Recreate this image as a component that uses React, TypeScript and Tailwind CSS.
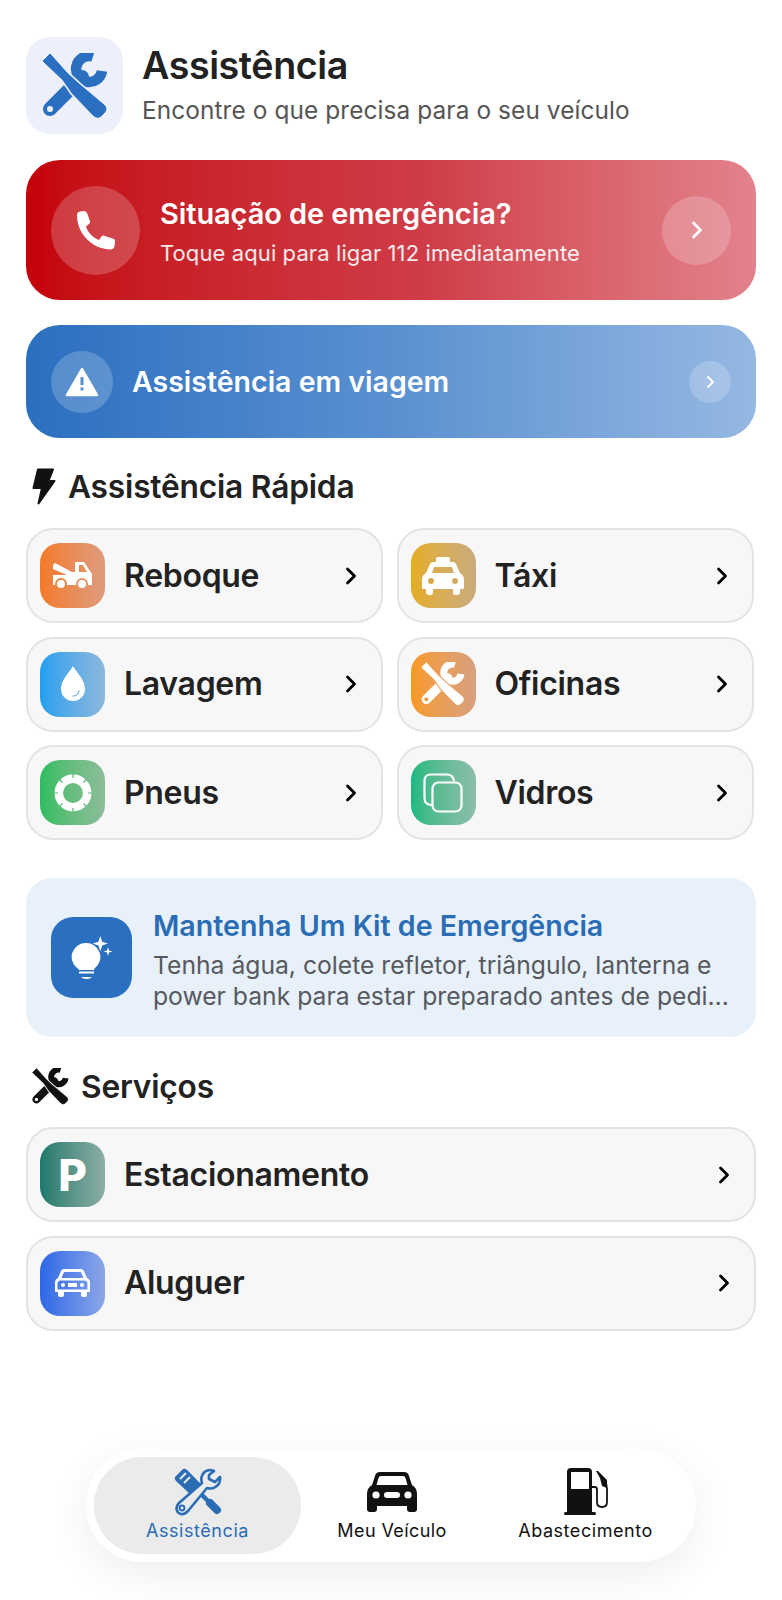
import type { ReactNode } from "react";

const font = { fontFamily: "Inter, 'Noto Sans', sans-serif" };

function Chevron({ className = "text-black" }: { className?: string }) {
  return (
    <svg width="12" height="18" viewBox="0 0 12 18" fill="none" className={className}>
      <path d="M2.5 2 L9.5 9 L2.5 16" stroke="currentColor" strokeWidth="2.8" strokeLinecap="round" strokeLinejoin="round" />
    </svg>
  );
}

const driverPath = "M1 8 L8 1 L25 20 L37 31 L62 52 Q66 56 62 60 L59 63 Q55 66 51 62 L30 40 L21 27 Z";

// filled crossed wrench + screwdriver, used in header, Oficinas and Serviços
function ToolsIcon({ size, id, className }: { size: number; id: string; className?: string }) {
  return (
    <svg width={size} height={size} viewBox="0 0 66 66" fill="none" className={className}>
      <mask id={id} maskUnits="userSpaceOnUse" x="0" y="0" width="66" height="66">
        <rect width="66" height="66" fill="white" />
        <path d={driverPath} fill="black" stroke="black" strokeWidth="4" />
        <circle cx="8" cy="56" r="3" fill="black" />
      </mask>
      <g mask={`url(#${id})`} stroke="currentColor">
        <path d="M8 56 L40 24" strokeWidth="14" strokeLinecap="round" />
        <path d="M51 3.6 A 13 13 0 1 0 60 18" strokeWidth="10.5" />
      </g>
      <path d={driverPath} fill="currentColor" stroke="currentColor" strokeWidth="1" strokeLinejoin="round" />
    </svg>
  );
}

function ToolsOutline() {
  return (
    <svg width="48" height="48" viewBox="0 0 48 48" fill="none" className="text-[#2a6db5]">
      <path d="M1 9 L9 1 Q11 0 13 2 L27 16 L17 27 L2 13 Q0 11 1 9Z" fill="currentColor" />
      <path d="M21 20 L42 41" stroke="currentColor" strokeWidth="4.5" />
      <path d="M36 35 L43 42" stroke="currentColor" strokeWidth="8" strokeLinecap="round" />
      <path d="M6 11 L12 5 M10 15 L16 9" stroke="#ebebeb" strokeWidth="2" />
      <path
        d="M35 2 C29 3 26 9 28 15 L5 35 C1 39 2 45 7 46 C10 47 12 45 14 43 L33 20 C40 22 47 17 46 9 L41 14 L35 11 L35 7 L40 3 Q38 2 35 2Z"
        fill="#ebebeb"
        stroke="currentColor"
        strokeWidth="2.6"
        strokeLinejoin="round"
      />
      <circle cx="8" cy="40" r="2.4" stroke="currentColor" strokeWidth="2" />
    </svg>
  );
}

function PhoneIcon() {
  return (
    <svg width="40" height="40" viewBox="0 0 40 40" fill="white">
      <path d="M1 5 Q1 2 4 1.5 L8 1 Q10 1 11 3 L14 11 Q14.5 13 13 14 L10 16.5 C11.5 22 17 28 23 30 L25.5 26.5 Q27 25 29 26 L38 29 Q39.5 30 39 32 L38.5 36 Q38 39 35 39.5 C15 39 1 23 1 5Z" />
    </svg>
  );
}

function Tile({ gradient, children }: { gradient: string; children: ReactNode }) {
  return (
    <div className={`flex h-[65px] w-[65px] shrink-0 items-center justify-center rounded-[20px] bg-gradient-to-r ${gradient}`}>
      {children}
    </div>
  );
}

function Row({ label, gradient, icon }: { label: string; gradient: string; icon: ReactNode }) {
  return (
    <div className="flex h-[95px] items-center rounded-[27px] border-2 border-[#e3e3e3] bg-[#f7f7f7] pl-[12px] pr-[24px]">
      <Tile gradient={gradient}>{icon}</Tile>
      <span className="ml-[19px] flex-1 text-[32px] font-semibold tracking-[-0.3px] text-[#222]">{label}</span>
      <Chevron />
    </div>
  );
}

function SectionTitle({ icon, children }: { icon: ReactNode; children: ReactNode }) {
  return (
    <div className="flex h-[40px] items-center pl-[6px]">
      {icon}
      <h2 className="mt-[2px] text-[31.7px] font-semibold tracking-[-0.2px] text-[#222]">{children}</h2>
    </div>
  );
}

export default function App() {
  return (
    <div style={font} className="flex min-h-[1600px] w-[782px] flex-col bg-white px-[26px] pt-[37px]">
      <header className="flex items-center">
        <div className="flex h-[97px] w-[97px] items-center justify-center rounded-[24px] bg-[#edf0fb]">
          <ToolsIcon size={66} id="h" className="text-[#2a6fc0]" />
        </div>
        <div className="ml-[19px]">
          <h1 className="text-[37.6px] font-semibold leading-[44px] tracking-[-0.4px] text-[#222]">Assistência</h1>
          <p className="mt-[5px] text-[24.4px] leading-[34px] tracking-[0.1px] text-[#555]">Encontre o que precisa para o seu veículo</p>
        </div>
      </header>

      <div className="mt-[26px] flex h-[140px] items-center rounded-[34px] bg-gradient-to-r from-[#c40008] via-[#cf3c48] via-55% to-[#e2828d] pl-[25px] pr-[25px]">
        <div className="flex h-[89px] w-[89px] items-center justify-center rounded-full bg-white/20">
          <PhoneIcon />
        </div>
        <div className="ml-[20px] flex-1 pt-[4px] text-white">
          <div className="text-[29px] font-semibold leading-[36px] tracking-[-0.1px]">Situação de emergência?</div>
          <div className="mt-[6px] text-[22px] leading-[30px] tracking-[0.1px] text-white/90">Toque aqui para ligar 112 imediatamente</div>
        </div>
        <div className="flex h-[69px] w-[69px] items-center justify-center rounded-full bg-white/20">
          <Chevron className="text-white" />
        </div>
      </div>

      <div className="mt-[25px] flex h-[113px] items-center rounded-[34px] bg-gradient-to-r from-[#2a6fc0] via-[#5a90d0] via-50% to-[#95b8e2] pl-[25px] pr-[25px]">
        <div className="flex h-[62px] w-[62px] items-center justify-center rounded-full bg-white/20">
          <svg width="34" height="30" viewBox="0 0 34 30">
            <path d="M17 2 L32 28 H2 Z" fill="white" stroke="white" strokeWidth="2.5" strokeLinejoin="round" />
            <rect x="15.5" y="10" width="3" height="8" fill="#5a8fcf" />
            <rect x="15.5" y="20.5" width="3" height="3" fill="#5a8fcf" />
          </svg>
        </div>
        <div className="ml-[19px] flex-1 pt-[2px] text-[28.5px] font-semibold text-white">Assistência em viagem</div>
        <div className="flex h-[42px] w-[42px] items-center justify-center rounded-full bg-white/20">
          <svg width="9" height="14" viewBox="0 0 9 14" fill="none">
            <path d="M2 2 L7 7 L2 12" stroke="white" strokeWidth="2" strokeLinecap="round" strokeLinejoin="round" />
          </svg>
        </div>
      </div>

      <div className="mt-[28px]">
        <SectionTitle
          icon={
            <svg width="24" height="37" viewBox="0 0 24 37" className="mr-[12px]">
              <path d="M6 1.5 H21 L16.5 13 H22.5 L6.5 35.5 L10 20 H1.5 Z" fill="#111" stroke="#111" strokeWidth="2" strokeLinejoin="round" />
            </svg>
          }
        >
          Assistência Rápida
        </SectionTitle>
      </div>

      <div className="mt-[22px] grid grid-cols-[357px_357px] gap-[13.5px]">
        <Row
          label="Reboque"
          gradient="from-[#f47a25] to-[#dd9b7b]"
          icon={
            <svg width="40" height="28" viewBox="0 0 40 28" fill="white">
              <path d="M0 3 L2 1 L19 10 L22 10 V1 Q22 0 23 0 H31 L39 12 V23 H0 V13 H14 L0 7Z" />
              <path d="M26 3 H30 L34 10 H26Z" fill="#e88f5c" />
              <circle cx="8" cy="22" r="6" fill="#ea8540" />
              <circle cx="8" cy="22" r="4" />
              <circle cx="29" cy="22" r="6" fill="#e4936a" />
              <circle cx="29" cy="22" r="4" />
            </svg>
          }
        />
        <Row
          label="Táxi"
          gradient="from-[#e5ad1b] to-[#c9ab7c]"
          icon={
            <svg width="42" height="38" viewBox="0 0 42 38" fill="white">
              <path
                fillRule="evenodd"
                d="M14 2 Q14 0 16 0 H26 Q28 0 28 2 V5 H31 Q33 5 34 7 L38 16 Q42 18 42 23 V31 Q42 32 41 32 H38 V35 Q38 38 35 38 H33 Q31 38 31 35 V32 H11 V35 Q11 38 9 38 H7 Q4 38 4 35 V32 H1 Q0 32 0 31 V23 Q0 18 4 16 L8 7 Q9 5 11 5 H14Z M12 10 L10 16 H32 L30 10Z"
              />
              <circle cx="9" cy="24" r="3" fill="#d8ab4a" />
              <circle cx="33" cy="24" r="3" fill="#d0ab66" />
            </svg>
          }
        />
        <Row
          label="Lavagem"
          gradient="from-[#1c9fef] to-[#8ab8db]"
          icon={
            <svg width="26" height="36" viewBox="0 0 26 36" fill="white">
              <path d="M13 0 C17 7 25 14 25 23 A12 12 0 0 1 1 23 C1 14 9 7 13 0Z" />
              <path d="M13 30 Q18 30 19 25" stroke="#6aaee0" strokeWidth="1.2" fill="none" strokeLinecap="round" />
            </svg>
          }
        />
        <Row
          label="Oficinas"
          gradient="from-[#f89a1d] to-[#d7a07e]"
          icon={<ToolsIcon size={44} id="o" className="text-white" />}
        />
        <Row
          label="Pneus"
          gradient="from-[#2bbd60] to-[#8dbc9b]"
          icon={
            <svg width="38" height="38" viewBox="0 0 38 38" fill="none">
              <circle cx="19" cy="19" r="14.2" stroke="white" strokeWidth="8.5" />
              <g stroke="#55b67a" strokeWidth="1.2">
                <path d="M19 0 V4 M19 34 V38 M0 19 H4 M34 19 H38 M5.5 5.5 L8.5 8.5 M29.5 29.5 L32.5 32.5 M32.5 5.5 L29.5 8.5 M8.5 29.5 L5.5 32.5" />
              </g>
            </svg>
          }
        />
        <Row
          label="Vidros"
          gradient="from-[#16b981] to-[#8cbdab]"
          icon={
            <svg width="40" height="40" viewBox="0 0 40 40" fill="none" stroke="white" strokeWidth="2.2">
              <path d="M9 32 Q1.5 32 1.5 25 V8 Q1.5 1.5 8 1.5 H24 Q30 1.5 31 8" />
              <rect x="9.5" y="9.5" width="29" height="29" rx="6" />
            </svg>
          }
        />
      </div>

      <div className="mt-[38px] flex h-[159px] items-center rounded-[26px] bg-[#e8f0fa] pl-[25px] pr-[25px]">
        <div className="flex h-[81px] w-[81px] shrink-0 items-center justify-center rounded-[22px] bg-[#2a6fc0]">
          <svg width="44" height="44" viewBox="0 0 44 44" fill="white">
            <path d="M16 7 A14 14 0 0 1 25 32 Q24 33 24 34 H9 Q9 33 7 32 A14 14 0 0 1 16 7Z" />
            <path d="M9 36.5 H24" stroke="white" strokeWidth="2" />
            <path d="M11 41 H22 Q20 43 16.5 43 Q13 43 11 41Z" />
            <path d="M34 0 L36 6 L42 8 L36 10 L34 16 L32 10 L26 8 L32 6Z" transform="translate(-2 0) scale(0.95)" />
            <path d="M38 11 L39 14.5 L42.5 15.5 L39 16.5 L38 20 L37 16.5 L33.5 15.5 L37 14.5Z" />
          </svg>
        </div>
        <div className="ml-[21px] min-w-0 flex-1 pt-[4px]">
          <div className="text-[28.6px] font-semibold leading-[36px] text-[#2a6db5]">Mantenha Um Kit de Emergência</div>
          <p className="mt-[6px] line-clamp-2 text-[24.7px] leading-[31px] text-[#565a60]">
            Tenha água, colete refletor, triângulo, lanterna e power bank para estar preparado antes de pedir ajuda na estrada
          </p>
        </div>
      </div>

      <div className="mt-[29px]">
        <SectionTitle icon={<ToolsIcon size={37} id="s" className="mr-[12px] text-[#111]" />}>Serviços</SectionTitle>
      </div>

      <div className="mt-[21px] flex flex-col gap-[13.5px]">
        <Row
          label="Estacionamento"
          gradient="from-[#1a7a6c] to-[#8caea7]"
          icon={<span className="text-[44px] font-extrabold leading-none text-white">P</span>}
        />
        <Row
          label="Aluguer"
          gradient="from-[#2d66e6] to-[#8ca6e6]"
          icon={
            <svg width="35" height="28" viewBox="0 0 35 28" fill="white">
              <path
                fillRule="evenodd"
                d="M9 0 H26 Q28 0 29 2 L32 9 Q35 10 35 14 V22 Q35 23 34 23 H32 V26 Q32 28 30 28 H28 Q26 28 26 26 V23 H9 V26 Q9 28 7 28 H5 Q3 28 3 26 V23 H1 Q0 23 0 22 V14 Q0 10 3 9 L6 2 Q7 0 9 0Z M10 3 Q9 3 8.5 4 L6.5 9 H28.5 L26.5 4 Q26 3 25 3Z M5 11.5 Q2.5 12 2.5 15 V20.5 H32.5 V15 Q32.5 12 30 11.5Z"
              />
              <circle cx="8" cy="16" r="2" />
              <circle cx="27" cy="16" r="2" />
              <path d="M13 14 H22 V18 H13Z" />
            </svg>
          }
        />
      </div>

      <nav className="mx-auto mb-[38px] mt-auto flex h-[113px] w-[610px] items-center rounded-[56px] bg-white px-[8px] shadow-[0_12px_44px_rgba(0,0,0,0.07)]">
        <div className="flex h-[97px] w-[207px] flex-col items-center justify-center rounded-[48px] bg-[#ebebeb]">
          <ToolsOutline />
          <span className="mt-[3px] text-[18px] leading-[24px] tracking-[0.55px] text-[#2a6db5]">Assistência</span>
        </div>
        <div className="flex w-[182px] flex-col items-center">
          <svg width="50" height="40" viewBox="0 0 50 40" fill="#111" className="my-[4px]">
            <path
              fillRule="evenodd"
              d="M13 0 H37 Q41 0 42 4 L45 13 Q50 16 50 22 V37 Q50 40 47 40 H43 Q40 40 40 37 V34 H10 V37 Q10 40 7 40 H3 Q0 40 0 37 V22 Q0 16 5 13 L8 4 Q9 0 13 0Z M14 4 Q12 4 11.5 6 L9.5 13 H40.5 L38.5 6 Q38 4 36 4Z"
            />
            <circle cx="9" cy="23" r="3.6" fill="white" />
            <circle cx="41" cy="23" r="3.6" fill="white" />
            <rect x="17" y="20" width="16" height="6" rx="3" fill="white" />
          </svg>
          <span className="mt-[3px] text-[18px] leading-[24px] tracking-[0.4px] text-[#111]">Meu Veículo</span>
        </div>
        <div className="flex w-[205px] flex-col items-center">
          <svg width="44" height="48" viewBox="0 0 44 48" fill="none">
            <path d="M3 4 Q3 0 7 0 H24 Q28 0 28 4 V44 H3Z M7 4 V21 H25 V4Z" fill="#111" fillRule="evenodd" />
            <rect x="0" y="44" width="32" height="3" rx="1.5" fill="#111" />
            <path d="M28 19 H31 Q33 19 33 22 V34 Q33 39 38 39 Q43 39 43 34 V21 L42 14" stroke="#111" strokeWidth="1.8" strokeLinecap="round" />
            <path d="M32 3 L34 3 L43 12 L43 20 L38 18 L36 10Z" fill="#111" />
          </svg>
          <span className="mt-[3px] text-[18px] leading-[24px] tracking-[0.55px] text-[#111]">Abastecimento</span>
        </div>
      </nav>
    </div>
  );
}
